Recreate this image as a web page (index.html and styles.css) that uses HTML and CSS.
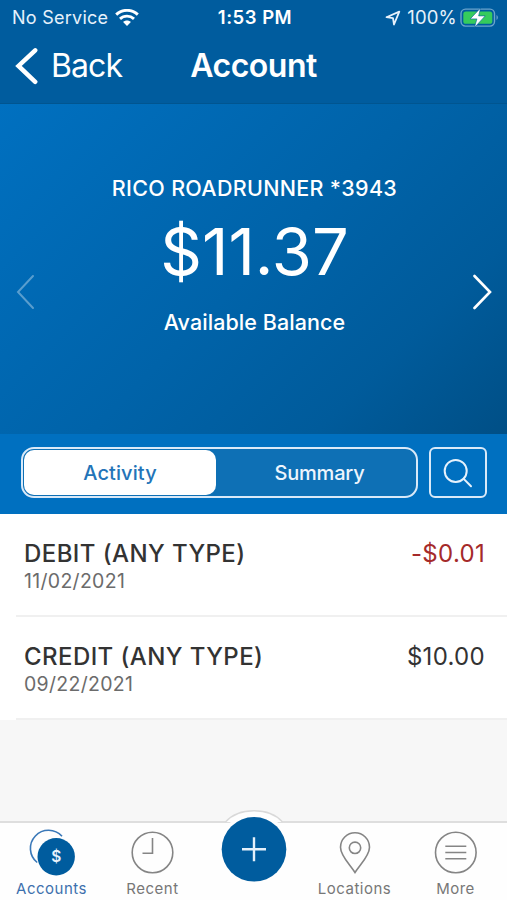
FILE: index.html
```html
<!DOCTYPE html>
<html lang="en">
<head>
<meta charset="utf-8">
<title>Account</title>
<link rel="stylesheet" href="styles.css">
</head>
<body>
<div class="app">
  <header class="header">
    <div class="status">
      <div class="status-left">
        <span class="carrier">No Service</span>
        <svg class="wifi" width="24" height="18" viewBox="0 0 24 18" fill="none" stroke="#fff" stroke-width="2.9">
          <path d="M1.200 5.600C7.200 -.1 16.800 -.1 22.800 5.600"/>
          <path d="M5 9.900C9 6.200 15 6.200 19 9.900"/>
          <path d="M8.100 13C10.300 11 13.700 11 15.900 13L12 17Z" fill="#fff" stroke="none"/>
        </svg>
      </div>
      <span class="clock">1:53 PM</span>
      <div class="status-right">
        <svg width="16" height="16" viewBox="0 0 16 16" fill="none" stroke="#e6f1fb" stroke-width="1.800" stroke-linejoin="round"><path d="M1.500 7.200L14.300 1.600L9 14.500L8 8.100Z"/></svg>
        <span class="percent">100%</span>
        <svg class="battery" width="40" height="20" viewBox="0 0 40 20">
          <rect x="1" y="1.100" width="33.500" height="17" rx="4.500" fill="none" stroke="#6ba3cc" stroke-width="1.400"/>
          <path d="M36.500 7c1.800.8 1.800 4.200 0 5z" fill="#6ba3cc"/>
          <rect x="3.300" y="3.400" width="29" height="12.400" rx="2.600" fill="#35cb5c"/>
          <path d="M20.600 0L10.200 10.900h6.700L14.500 19.500 25.200 7.900h-6.600z" fill="#fff" stroke="#005c9e" stroke-width=".6"/>
        </svg>
      </div>
    </div>
    <div class="titlebar">
      <div class="back">
        <svg width="24" height="40" viewBox="0 0 24 40" fill="none" stroke="#fff" stroke-width="4.500" stroke-linecap="round"><path d="M21.200 4.300L4.500 19.900L21.200 35.800"/></svg>
        <span class="back-label">Back</span>
      </div>
      <h1 class="title">Account</h1>
    </div>
  </header>

  <section class="hero">
    <svg class="chev chev-prev" width="20" height="36" viewBox="0 0 20 36"><path d="M17 2L2 18L17 34"/></svg>
    <div class="balance">
      <div class="name">RICO ROADRUNNER *3943</div>
      <div class="amount">$11.37</div>
      <div class="caption">Available Balance</div>
    </div>
    <svg class="chev" width="20" height="36" viewBox="0 0 20 36"><path d="M1.500 2L17 18L1.500 34"/></svg>
  </section>

  <div class="toolbar">
    <div class="segments">
      <div class="segment active"><span>Activity</span></div>
      <div class="segment summary"><span>Summary</span></div>
    </div>
    <div class="search">
      <svg width="30" height="30" viewBox="0 0 30 30" fill="none" stroke="#e6f2fc" stroke-width="2" stroke-linecap="round"><circle cx="12.700" cy="12.900" r="11"/><path d="M20.700 20.900L28 28.300"/></svg>
    </div>
  </div>

  <main class="list">
    <div class="row">
      <div>
        <div class="kind">DEBIT (ANY TYPE)</div>
        <div class="date">11/02/2021</div>
      </div>
      <div class="sum negative">-$0.01</div>
    </div>
    <div class="row">
      <div>
        <div class="kind">CREDIT (ANY TYPE)</div>
        <div class="date">09/22/2021</div>
      </div>
      <div class="sum">$10.00</div>
    </div>
  </main>

  <nav class="tabs">
    <div class="tab selected">
      <svg width="50" height="48" viewBox="0 0 50 48"><path d="M10.200 39.500A18.100 18.100 0 1 1 35 13.300" fill="none" stroke="#3a78b8" stroke-width="1.600"/><circle cx="29.200" cy="33.700" r="18.700" fill="#005c9e"/><text class="coin" x="29.200" y="39.200" text-anchor="middle">$</text></svg>
      <span>Accounts</span>
    </div>
    <div class="tab">
      <svg width="44" height="48" viewBox="0 0 44 48" fill="none" stroke="#858585" stroke-width="1.600"><circle cx="21.500" cy="29.500" r="20.300"/><path d="M21.500 15V30.200H11.500"/></svg>
      <span>Recent</span>
    </div>
    <div class="tab add">
      <svg class="add-button" width="84" height="80" viewBox="0 0 84 80"><path d="M13.500 12C20 4.500 30 0.700 42 0.700S64 4.500 70.500 12" fill="#fefefe" stroke="#d9d9d9" stroke-width="1.400"/><circle cx="42" cy="39.500" r="36" fill="#fefefe"/><circle cx="42" cy="39.300" r="32.300" fill="#005c9e"/><path d="M30 39.300H54M42 27.300V51.300" stroke="#e4f0fa" stroke-width="2.400"/></svg>
    </div>
    <div class="tab">
      <svg width="44" height="48" viewBox="0 0 44 48" fill="none" stroke="#858585" stroke-width="1.600"><path d="M22 49.500C17 41.500 7.500 33 7.500 24.200A14.500 14.500 0 0 1 36.500 24.200C36.500 33 27 41.500 22 49.500Z"/><circle cx="22" cy="24.800" r="5.700"/></svg>
      <span>Locations</span>
    </div>
    <div class="tab">
      <svg width="44" height="48" viewBox="0 0 44 48" fill="none" stroke="#858585" stroke-width="1.600"><circle cx="21.800" cy="29.500" r="20.300"/><path d="M11.300 23.300H32.300M11.300 29.500H32.300M11.300 35.700H32.300"/></svg>
      <span>More</span>
    </div>
  </nav>
</div>
</body>
</html>
```
FILE: styles.css
```css
* { box-sizing: border-box; }
body { margin: 0; font-family: Inter, "Liberation Sans", sans-serif; color: #333; }
svg { display: block; flex: none; }
.app { width: 507px; height: 900px; display: flex; flex-direction: column; background: #f7f7f7; overflow: hidden; white-space: nowrap; }

.header { height: 104px; flex: none; background: #005c9e; border-bottom: 1px solid #005590; color: #fff; }
.status { height: 35px; display: grid; grid-template-columns: 1fr auto 1fr; align-items: center; padding: 0 9px 0 12px; font-size: 18px; line-height: 35px; color: #e6f1fb; }
.status-left, .status-right { display: flex; align-items: center; }
.status-left { gap: 7px; }
.status-right { justify-content: flex-end; gap: 5px; }
.carrier { letter-spacing: .25px; }
.percent { margin: 0 -2px 0 1px; font-size: 18.500px; letter-spacing: .2px; }
.battery { margin-right: -2px; }
.clock { font-size: 18.500px; letter-spacing: .5px; font-weight: 600; color: #fff; }
.titlebar { height: 61px; display: grid; grid-template-columns: 1fr auto 1fr; align-items: center; padding: 0 14px; line-height: 60px; }
.back { display: flex; align-items: center; gap: 13px; font-size: 32px; letter-spacing: -.9px; }
.title { margin: 0; font-size: 32px; font-weight: 600; letter-spacing: -.5px; }

.hero { height: 330px; flex: none; display: flex; justify-content: space-between; padding: 0 14px 0 16px; color: #fff; background: linear-gradient(135deg, #0070c0 0%, #0063a9 50%, #005b9b 77%, #004f86 100%); }
.chev { margin-top: 170px; fill: none; stroke: #fff; stroke-width: 2.600; stroke-linecap: round; }
.chev-prev { opacity: .35; stroke-width: 2; }
.balance { display: flex; flex-direction: column; align-items: center; font-weight: 500; }
.name { margin-top: 69px; line-height: 30px; font-size: 21.500px; letter-spacing: .3px; }
.amount { margin-top: 9px; line-height: 80px; font-size: 65px; font-weight: 400; }
.caption { margin-top: 15px; line-height: 30px; font-size: 21.500px; letter-spacing: .07px; }

.toolbar { height: 80px; flex: none; display: flex; gap: 11px; padding: 13px 20px 16px 21px; background: #0070c0; }
.segments { flex: 1; display: flex; padding: 1px; border: 2px solid #d9e9f8; border-radius: 13px; background: #0e70b5; font-size: 20px; font-weight: 500; color: #edf5fd; }
.segment { flex: 1; display: flex; align-items: center; justify-content: center; }
.segment.active { flex: none; width: 192px; background: #fff; color: #2374b8; border-radius: 10px; letter-spacing: .1px; }
.segment.summary { padding-left: 8px; letter-spacing: -.2px; }
.search { width: 58px; display: flex; align-items: center; justify-content: center; border: 2px solid #d9e9f8; border-radius: 6px; }

.list { flex: none; background: #fff; }
.row { height: 103px; margin-left: 16px; padding: 25px 22px 0 8px; display: flex; justify-content: space-between; border-bottom: 2px solid #f0f0f0; line-height: 30px; }
.kind { font-size: 24px; font-weight: 500; letter-spacing: .42px; }
.date { font-size: 19.500px; line-height: 24px; letter-spacing: .3px; color: #6b6b6b; }
.sum { font-size: 24px; letter-spacing: .3px; }
.negative { color: #a52a2a; }

.tabs { margin-top: auto; height: 79px; flex: none; display: grid; grid-template-columns: repeat(5, 101px); justify-content: center; border-top: 2px solid #dedede; background: #fefefe; font-size: 15px; color: #777; }
.tab { display: flex; flex-direction: column; align-items: center; line-height: 20px; letter-spacing: .5px; }
.tab svg { overflow: visible; }
.tab span { margin-top: 8px; }
.selected { color: #3d70ad; }
.coin { font-size: 15.500px; font-weight: 600; letter-spacing: 0; fill: #e8f2fb; }
.add-button { margin-top: -13px; }
```
